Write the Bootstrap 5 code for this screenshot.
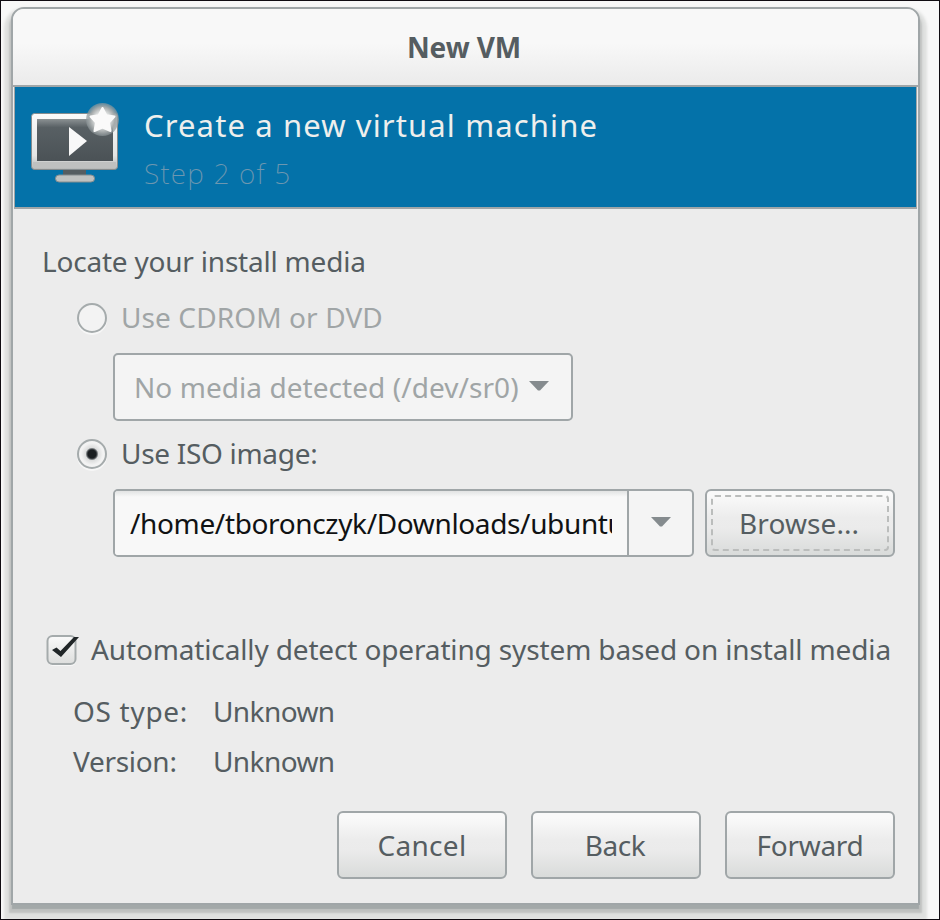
<!DOCTYPE html>
<html lang="en">
<head>
<meta charset="utf-8">
<meta name="viewport" content="width=device-width, initial-scale=1">
<title>New VM</title>
<link href="https://cdn.jsdelivr.net/npm/bootstrap@5.3.0/dist/css/bootstrap.min.css" rel="stylesheet">
<style>
body{font:28px/38px "Noto Sans",sans-serif;color:#555d61;background:#f8f8f8;overflow:hidden}
.desk{width:940px;height:920px;border:1px solid #100c12;padding:6px 19px 14px 10px;overflow:hidden}
.win{height:898px;border:2px solid #a0a6a8;border-radius:13px 13px 0 0;background:#ececec;
  box-shadow:0 5px 1px -1px #a3a9a9,0 6px 2px 2px #bfc1c0,0 8px 3px 7px #dfe0df}
.titlebar{height:78px;border-bottom:2px solid #a0a6a8;border-radius:11px 11px 0 0;background:linear-gradient(#f8f8f8 45%,#ececec 95%);font-weight:700;letter-spacing:-.1px;padding:0 3px 1px 0}
.banner{height:122px;margin:0 1px;border:solid #a0a6a8;border-width:0 1px 2px;background:#0472a9}
.monitor{width:92px;height:84px;margin:15px 0 0 14px}
.headline{font-size:31px;line-height:42px;letter-spacing:1.12px;color:#eeefed;margin:17px 0 0 23px}
.stepline{font-weight:200;letter-spacing:1.2px;color:#6d97b0;margin:8px 0 0 23px}
.pane{padding:33px 23px 0 29px}
.opt{height:38px}
.dot{width:30px;height:30px;margin:2px 14px 0 35px;border:2px solid #a5abac;border-radius:50%;background:#f3f3f3;box-shadow:0 2px 0 #f7f7f7}
.dot.on{background:radial-gradient(circle,#1a1e20 0 4px,#4c5154 5px,#dcdddd 6.5px,#f3f3f3 11px)}
.off{color:#a0a5a6}
.field{height:68px;border:2px solid #a0a6a8;border-radius:5px;background:#f4f4f4}
.media{width:460px;margin-left:71px;padding:0 22px 0 19px;letter-spacing:.06px}
.entry{width:582px;margin-left:71px}
.entrytext{width:514px;border-right:2px solid #a0a6a8;background:linear-gradient(#e2e3e3,#f8f8f8 6px);border-radius:3px 0 0 3px;padding:0 15px 0 15px;color:#101213;letter-spacing:-.36px}
.vbtn{height:68px;width:170px;padding:0;border:2px solid #a0a6a8;border-radius:6px;background:linear-gradient(#f9f9f9 8%,#ececec 42%,#ebebeb 58%,#d9dbda);color:#555d61;font-size:28px;line-height:38px}
.browse{width:190px;margin-left:11px;padding:4px}
.focusline{height:100%;border:2px dashed #bbbdbc;border-radius:4px;padding-right:2px}
.tick{width:34px;height:36px;margin:1px 11px 0 4px}
.ls1{letter-spacing:-.21px}.ls2{letter-spacing:.1px}.ls3{letter-spacing:-.3px}.ls4{letter-spacing:-.6px}
.facts{margin:24px 0 0 31px}
.facts dt{width:140px}
.actions{margin-top:31px;gap:24px}
</style>
</head>
<body>
<main class="desk">
  <section class="win d-flex flex-column">
    <header class="titlebar d-flex align-items-center justify-content-center flex-shrink-0">New VM</header>
    <div class="banner d-flex flex-shrink-0">
      <svg class="monitor flex-shrink-0" viewBox="0 0 92 84">
        <defs>
          <linearGradient id="frame" x2="0" y2="1"><stop stop-color="#fafafa"/><stop offset=".75" stop-color="#e4e5e4"/><stop offset="1" stop-color="#b4b7b6"/></linearGradient>
          <linearGradient id="screen" x2="0" y2="1"><stop stop-color="#8b9193"/><stop offset=".2" stop-color="#586064"/><stop offset="1" stop-color="#4b5256"/></linearGradient>
          <radialGradient id="glow"><stop offset=".4" stop-color="#e9ebea"/><stop offset=".75" stop-color="#a6abac"/><stop offset="1" stop-color="#8c9598" stop-opacity=".65"/></radialGradient>
        </defs>
        <rect x="34" y="67" width="23" height="10" fill="#555d61"/>
        <rect x="26.500" y="73" width="39" height="7" rx="3.500" fill="#bfc1c0" stroke="#858c8e"/>
        <rect x="2.500" y="11.500" width="86" height="56" rx="3" fill="url(#frame)" stroke="#858c8e"/>
        <path d="M4 60H87V66H4Z" fill="#bfc1c0"/>
        <rect x="8" y="17" width="76" height="42" fill="url(#screen)"/>
        <circle cx="73.500" cy="17.500" r="16.500" fill="url(#glow)"/>
        <path d="M40 25L58 39L40 54Z" fill="#f8f8f8"/>
        <path d="M73.500 6L77.300 13.300L85.500 14.500L80 20.500L81.500 29L73.500 25.500L65.500 29L67 20.500L61.500 14.500L69.700 13.300Z" fill="#fafafa" stroke="#fafafa" stroke-width="2" stroke-linejoin="round"/>
      </svg>
      <div>
        <div class="headline text-nowrap">Create a new virtual machine</div>
        <div class="stepline text-nowrap">Step 2 of 5</div>
      </div>
    </div>
    <div class="pane text-nowrap">
      <div class="ls1">Locate your install media</div>
      <div class="opt d-flex align-items-center off" style="margin-top:18px"><span class="dot"></span><span class="ls2">Use CDROM or DVD</span></div>
      <div class="field media d-flex align-items-center justify-content-between off" style="margin-top:17px">
        <span>No media detected (/dev/sr0)</span>
        <svg width="20" height="12" viewBox="0 0 20 12"><path d="M0 0H20L11 9.500H9Z" fill="#858b8e"/></svg>
      </div>
      <div class="opt d-flex align-items-center" style="margin-top:13px"><span class="dot on"></span><span class="ls3">Use ISO image:</span></div>
      <div class="d-flex" style="margin-top:17px">
        <div class="field entry d-flex">
          <div class="entrytext d-flex align-items-center"><span class="overflow-hidden">/home/tboronczyk/Downloads/ubuntu</span></div>
          <div class="flex-fill d-flex align-items-center justify-content-center"><svg width="20" height="12" viewBox="0 0 20 12"><path d="M0 0H20L11 9.500H9Z" fill="#858b8e"/></svg></div>
        </div>
        <button class="btn vbtn browse"><span class="focusline d-flex align-items-center justify-content-center ls2">Browse...</span></button>
      </div>
      <div class="opt d-flex align-items-center" style="margin-top:73px">
        <svg class="tick" viewBox="0 0 34 36">
          <defs><linearGradient id="box" x2="0" y2="1"><stop stop-color="#fafafa"/><stop offset="1" stop-color="#dddedd"/></linearGradient></defs>
          <rect x="2" y="6" width="28" height="28" rx="5" fill="#f8f8f8"/>
          <rect x="1.500" y="4" width="28" height="28" rx="5" fill="url(#box)" stroke="#a5abac" stroke-width="2"/>
          <path d="M6 18L10.500 15.500L14.500 19L28 5H33L15 25Z" fill="#212628"/>
        </svg>
        <span style="letter-spacing:-.14px">Automatically detect operating system based on install media</span>
      </div>
      <dl class="facts mb-0">
        <div class="d-flex"><dt class="fw-normal" style="letter-spacing:.7px">OS type:</dt><dd class="ls4 mb-0">Unknown</dd></div>
        <div class="d-flex" style="margin-top:12px"><dt class="fw-normal ls3">Version:</dt><dd class="ls4 mb-0">Unknown</dd></div>
      </dl>
      <div class="actions d-flex justify-content-end">
        <button class="btn vbtn" style="letter-spacing:.3px">Cancel</button>
        <button class="btn vbtn" style="letter-spacing:-.5px;padding-right:2px">Back</button>
        <button class="btn vbtn ls3">Forward</button>
      </div>
    </div>
  </section>
</main>
<script src="https://cdn.jsdelivr.net/npm/bootstrap@5.3.0/dist/js/bootstrap.bundle.min.js"></script>
</body>
</html>
